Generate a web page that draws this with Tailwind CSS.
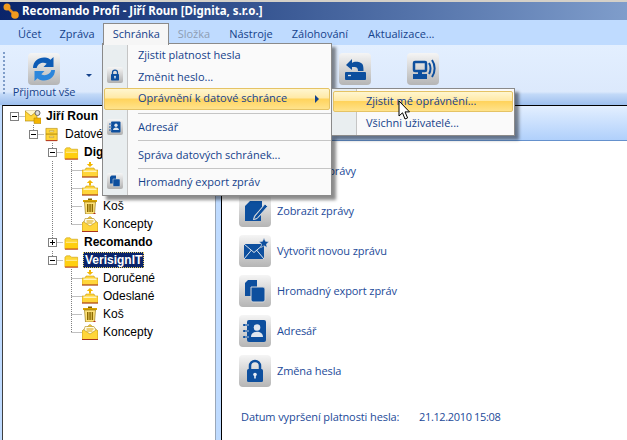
<!DOCTYPE html>
<html lang="en">
<head>
<meta charset="UTF-8">
<title>Recomando Profi</title>
<script src="https://cdn.jsdelivr.net/npm/@tailwindcss/browser@4"></script>
</head>
<body class="bg-white">
<svg width="0" height="0" class="absolute">
  <defs>
    <symbol id="folder" viewBox="0 0 16 16"><path d="M1 4.500 2.500 3h4l1.500 1.500h6.500V15H1z" fill="#fdd835" stroke="#c99700" stroke-width=".6"/><path d="M1 6.500h13.600V15H1z" fill="#ffcf10"/><path d="M1 14.500h14v1H1z" fill="#b3261e"/><path d="M2 7h12v1.500H2z" fill="#ffe98a"/></symbol>
    <symbol id="inbox" viewBox="0 0 16 16"><path d="M8 5 4.800 2H7V0h2v2h2.200z" fill="#f2b600"/><path d="M0 8h3l1-2h8l1 2h3v7H0z" fill="#ffd53a" stroke="#b98a00" stroke-width=".5"/><path d="M1.500 8.500h13v1.500h-13z" fill="#fff3b8"/><path d="M0 14.500h16v1H0z" fill="#a8341c"/></symbol>
    <symbol id="outbox" viewBox="0 0 16 16"><path d="M8 0 11.200 3H9v2.500H7V3H4.800z" fill="#f2b600"/><path d="M0 8h3l1-2h8l1 2h3v7H0z" fill="#ffd53a" stroke="#b98a00" stroke-width=".5"/><path d="M1.500 8.500h13v1.500h-13z" fill="#fff3b8"/><path d="M0 14.500h16v1H0z" fill="#a8341c"/></symbol>
    <symbol id="trash" viewBox="0 0 16 16"><path d="M1 2h14v2H1z" fill="#d9a400"/><path d="M6 .5h4V2H6z" fill="#806000"/><path d="M2.500 4h11l-1 12h-9z" fill="#ffe27a" stroke="#8c6a00" stroke-width=".6"/><path d="M5 6h1.500v8H5zM7.300 6h1.500v8H7.300zM9.600 6h1.500v8H9.600z" fill="#8c6a00"/><path d="M11.500 15h2v1h-2z" fill="#b3261e"/></symbol>
    <symbol id="draft" viewBox="0 0 16 16"><path d="M0 7 8 .5 16 7v8.500H0z" fill="#ffd53a" stroke="#a67c00" stroke-width=".6"/><path d="M3 2.500h9l2 3.500-6 4-6-4z" fill="#fffbe6" stroke="#a67c00" stroke-width=".5"/><path d="M4.500 5h7M4.500 7h6" stroke="#d9a400"/><path d="M0 15h16v1H0z" fill="#a8341c"/></symbol>
    <symbol id="account" viewBox="0 0 16 16"><path d="M0 3h12v10H0z" fill="#ffd53a" stroke="#a67c00" stroke-width=".6"/><path d="M0 3 6 8l6-5" fill="#fff6cc" stroke="#a67c00" stroke-width=".6"/><circle cx="12.500" cy="5" r="2.500" fill="#ddd" stroke="#666"/><path d="M9 10h7v5.500H9z" fill="#f5b400" stroke="#a67c00" stroke-width=".5"/></symbol>
    <symbol id="drawer" viewBox="0 0 16 16"><path d="M1 1h13v14H1z" fill="#ffd53a" stroke="#a67c00" stroke-width=".6"/><path d="M1 7.500h13" stroke="#a67c00"/><path d="M5 3.500h5v1.500H5zM5 10h5v1.500H5z" fill="#fff3b8" stroke="#8c6a00" stroke-width=".4"/><path d="M1 14.500h13v1H1z" fill="#b3261e"/></symbol>

    <symbol id="i-lock" viewBox="0 0 32 32"><path d="M11 15v-4a5 5 0 0 1 10 0v4" fill="none" stroke="#0d4f9e" stroke-width="2.500"/><rect x="8" y="14" width="16" height="13" rx="1.500" fill="#0d4f9e"/><circle cx="16" cy="19.500" r="1.800" fill="#e8eef5"/><rect x="15.200" y="20" width="1.600" height="3.500" fill="#e8eef5"/></symbol>
    <symbol id="i-book" viewBox="0 0 32 32"><rect x="8" y="5" width="19" height="22" rx="2" fill="#0d4f9e"/><circle cx="18" cy="12.500" r="3.300" fill="#dfe6ee"/><path d="M12 22c0-7 12-7 12 0z" fill="#dfe6ee"/><path d="M5 10h6M5 16h6M5 22h6" stroke="#0d4f9e" stroke-width="2.200" stroke-linecap="round" fill="none"/><path d="M6 10h4M6 16h4M6 22h4" stroke="#dfe6ee" stroke-width=".8"/></symbol>
    <symbol id="i-export" viewBox="0 0 32 32"><path d="M6 8l3-3h9v16H6z" fill="#0d4f9e"/><path d="M12 12h12a2 2 0 0 1 2 2v11a2 2 0 0 1-2 2H14a2 2 0 0 1-2-2z" fill="#0d4f9e" stroke="#d8d8d8" stroke-width="1"/></symbol>
    <symbol id="i-sync" viewBox="0 0 32 32"><path d="M5 15C5 8 11 4 17 4.500c2.500.2 4.500 1 5.500 2.200L25.500 4v10h-10l3.200-3.200c-3.500-2.200-9-.4-10 4.200z" fill="#0d5bb5"/><path d="M27 17c0 7-6 11-12 10.500-2.500-.2-4.500-1-5.500-2.200L6.500 28V18h10l-3.200 3.200c3.500 2.200 9 .4 10-4.200z" fill="#2c86dc"/></symbol>
    <symbol id="i-reply" viewBox="0 0 32 32"><rect x="6" y="19" width="21" height="8" rx="1" fill="#0d4f9e"/><path d="M9 22.500h3" stroke="#dfe6ee" stroke-width="1.300"/><path d="M7 12 13 6v4c2-2 10-2 11 2.500 .5 2 .5 4 .5 5.500H19c0-3-1-4.500-6-4v3z" fill="#0d4f9e"/></symbol>
    <symbol id="i-signal" viewBox="0 0 32 32"><rect x="7" y="9" width="12" height="9" rx="1" fill="none" stroke="#0d4f9e" stroke-width="2.500"/><path d="M11 18h4v3h-4zM6 21h14v5H6z" fill="#0d4f9e"/><path d="M22 10c2 3 2 8 0 11M25 7c3.500 5 3.500 12 0 17" fill="none" stroke="#0d4f9e" stroke-width="2"/></symbol>
    <symbol id="i-note" viewBox="0 0 32 32"><path d="M6 11l5-5h12v6l-8 9-1 4 4-1 4-4v6H6z" fill="#0d4f9e"/><path d="M16 21 26 9l2.500 2.500L18 23.500l-3.500 1z" fill="#0d4f9e" stroke="#e4e4e4" stroke-width=".8"/></symbol>
    <symbol id="i-mail" viewBox="0 0 32 32"><path d="M5 9h20v15H5z" fill="#0d4f9e"/><path d="M5 9l10 8.500L25 9M5 24l7.500-9M25 24l-7.500-9" fill="none" stroke="#dfe6ee" stroke-width="1"/><path d="M25 3l1.500 3.300 3.500.4-2.600 2.400.7 3.500-3.100-1.800-3.100 1.800.7-3.500-2.600-2.400 3.500-.4z" fill="#0d4f9e" stroke="#e4e4e4" stroke-width=".6"/></symbol>
  </defs>
</svg>

<div class="relative w-[627px] h-[440px] overflow-hidden flex flex-col font-['Open_Sans',sans-serif] text-[11px] text-[#15428b]">

  <!-- Title bar -->
  <div class="h-[2px] bg-[#d4d0c8]"></div>
  <div class="h-[18px] flex items-center bg-gradient-to-r from-[#0a246a] to-[#7f9dcb]">
    <svg class="w-[16px] h-[16px] ml-[3px]" viewBox="0 0 16 16"><path d="M3.500 3.500 12 12" stroke="#e88a1a" stroke-width="2.500"/><circle cx="4" cy="4" r="3.500" fill="#f09a1e"/><circle cx="12" cy="12" r="3.800" fill="#f09a1e"/></svg>
    <span class="ml-[3px] text-white font-bold text-[11.5px] font-['Noto_Sans',sans-serif] whitespace-nowrap">Recomando Profi - Jiří Roun [Dignita, s.r.o.]</span>
  </div>

  <!-- Menu bar -->
  <div class="h-[25px] bg-[#bfdbff] flex items-center whitespace-nowrap pt-[3px]">
    <span class="ml-[18px]">Účet</span>
    <span class="ml-[18px]">Zpráva</span>
    <div class="relative z-20 self-start ml-[8px] w-[66px] h-[22px] bg-[#f6f6f6] border border-b-0 border-[#8a8a8a] pl-[9px] leading-[19px]">Schránka</div>
    <span class="ml-[9px] text-[#8d9db3]">Složka</span>
    <span class="ml-[19px]">Nástroje</span>
    <span class="ml-[19px]">Zálohování</span>
    <span class="ml-[20px]">Aktualizace...</span>
  </div>

  <!-- Toolbar -->
  <div class="h-[60px] relative bg-[linear-gradient(#e3efff_0%,#dce9fc_78%,#c2d9f8_82%,#9dbfee_100%)] flex items-start">
    <div class="ml-[3px] mt-[7px] h-[42px] border-l-2 border-dotted border-[#7f9dc9]"></div>
    <div class="ml-[7px] flex flex-col items-center w-[64px] mt-[8px]">
      <div class="w-[32px] h-[32px] rounded-[4px] bg-gradient-to-b from-[#f5f5f5] to-[#b5b5b5]"><svg class="w-full h-full"><use href="#i-sync"/></svg></div>
      <span class="-mt-[1px] leading-[15px] tracking-[-0.1px]">Přijmout vše</span>
    </div>
    <div class="ml-[10px] mt-[29px] w-0 h-0 border-x-[3px] border-x-transparent border-t-[3px] border-t-[#15428b]"></div>
    <div class="ml-[247px] mt-[8px] w-[32px] h-[32px] rounded-[4px] bg-gradient-to-b from-[#f5f5f5] to-[#b5b5b5]"><svg class="w-full h-full"><use href="#i-reply"/></svg></div>
    <div class="ml-[36px] mt-[8px] w-[32px] h-[32px] rounded-[4px] bg-gradient-to-b from-[#f5f5f5] to-[#b5b5b5]"><svg class="w-full h-full"><use href="#i-signal"/></svg></div>
  </div>

  <!-- Main -->
  <div class="flex-1 flex min-h-0 bg-[#bfdbff]">
    <!-- Tree -->
    <div class="relative ml-[2px] w-[214px] border-l border-t border-l-[#404040] border-t-black bg-white border-r border-r-[#9aa7b8] font-['Liberation_Sans',sans-serif] text-[12px] text-black whitespace-nowrap pt-[1px]">
      <svg class="absolute left-0 top-0 w-[214px] h-[334px]" fill="none" stroke="#808080" stroke-dasharray="1 1">
        <path d="M11.500 10.500H22M30.500 19V29M30.500 28.500H41M49.500 37V47M49.500 46.500H60M49.500 55V137M49.500 136.500H60M49.500 145V155M49.500 154.500H60M68.500 55V118M68.500 64.500H79M68.500 82.500H79M68.500 100.500H79M68.500 118.500H79M68.500 163V226M68.500 172.500H79M68.500 190.500H79M68.500 208.500H79M68.500 226.500H79"/>
      </svg>
      <div class="relative flex items-center h-[18px]"><span class="ml-[7px] w-[9px] h-[9px] border border-[#808080] bg-white flex items-center justify-center"><span class="w-[5px] h-px bg-black"></span></span><svg class="ml-[6px] w-[16px] h-[16px]"><use href="#account"/></svg><span class="ml-[5px] font-bold">Jiří Roun</span></div>
      <div class="relative flex items-center h-[18px]"><span class="ml-[26px] w-[9px] h-[9px] border border-[#808080] bg-white flex items-center justify-center"><span class="w-[5px] h-px bg-black"></span></span><svg class="ml-[7px] w-[14px] h-[15px]"><use href="#drawer"/></svg><span class="ml-[6px]">Datové schránky</span></div>
      <div class="relative flex items-center h-[18px]"><span class="ml-[45px] w-[9px] h-[9px] border border-[#808080] bg-white flex items-center justify-center"><span class="w-[5px] h-px bg-black"></span></span><svg class="ml-[7px] w-[15px] h-[15px]"><use href="#folder"/></svg><span class="ml-[5px] font-bold">Dignita</span></div>
      <div class="relative flex items-center h-[18px]"><svg class="ml-[79px] w-[16px] h-[16px]"><use href="#inbox"/></svg><span class="ml-[5px]">Doručené</span></div>
      <div class="relative flex items-center h-[18px]"><svg class="ml-[79px] w-[16px] h-[16px]"><use href="#outbox"/></svg><span class="ml-[5px]">Odeslané</span></div>
      <div class="relative flex items-center h-[18px]"><svg class="ml-[79px] w-[16px] h-[16px]"><use href="#trash"/></svg><span class="ml-[5px]">Koš</span></div>
      <div class="relative flex items-center h-[18px]"><svg class="ml-[79px] w-[16px] h-[16px]"><use href="#draft"/></svg><span class="ml-[5px]">Koncepty</span></div>
      <div class="relative flex items-center h-[18px]"><span class="ml-[45px] w-[9px] h-[9px] border border-[#808080] bg-white flex items-center justify-center text-[9px] leading-none"><span class="relative w-[5px] h-px bg-black"><span class="absolute left-[2px] top-[-2px] w-px h-[5px] bg-black"></span></span></span><svg class="ml-[7px] w-[15px] h-[15px]"><use href="#folder"/></svg><span class="ml-[5px] font-bold">Recomando</span></div>
      <div class="relative flex items-center h-[18px]"><span class="ml-[45px] w-[9px] h-[9px] border border-[#808080] bg-white flex items-center justify-center"><span class="w-[5px] h-px bg-black"></span></span><svg class="ml-[7px] w-[15px] h-[15px]"><use href="#folder"/></svg><span class="ml-[4px] px-[1px] h-[16px] leading-[14px] font-bold bg-[#0a246a] text-white border border-dotted border-[#e8d060]">VerisignIT</span></div>
      <div class="relative flex items-center h-[18px]"><svg class="ml-[79px] w-[16px] h-[16px]"><use href="#inbox"/></svg><span class="ml-[5px]">Doručené</span></div>
      <div class="relative flex items-center h-[18px]"><svg class="ml-[79px] w-[16px] h-[16px]"><use href="#outbox"/></svg><span class="ml-[5px]">Odeslané</span></div>
      <div class="relative flex items-center h-[18px]"><svg class="ml-[79px] w-[16px] h-[16px]"><use href="#trash"/></svg><span class="ml-[5px]">Koš</span></div>
      <div class="relative flex items-center h-[18px]"><svg class="ml-[79px] w-[16px] h-[16px]"><use href="#draft"/></svg><span class="ml-[5px]">Koncepty</span></div>
    </div>

    <!-- Content -->
    <div class="ml-[5px] flex-1 border-l border-black flex flex-col bg-white">
      <div class="h-[36px] border-t border-t-black border-b border-b-[#6591cd] bg-gradient-to-b from-[#e3efff] to-[#b0d0fb]"></div>
      <div class="flex-1 pl-[17px] pt-[14px] text-[#1c4a99] whitespace-nowrap tracking-[-0.1px]">
        <div class="flex flex-col gap-[8px]">
          <div class="flex items-center gap-[6px]"><div class="w-[32px] h-[32px] rounded-[4px] bg-gradient-to-b from-[#f5f5f5] to-[#b5b5b5]"><svg class="w-full h-full"><use href="#i-sync"/></svg></div><span>Přijmout zprávy</span></div>
          <div class="flex items-center gap-[6px]"><div class="w-[32px] h-[32px] rounded-[4px] bg-gradient-to-b from-[#f5f5f5] to-[#b5b5b5]"><svg class="w-full h-full"><use href="#i-note"/></svg></div><span>Zobrazit zprávy</span></div>
          <div class="flex items-center gap-[6px]"><div class="w-[32px] h-[32px] rounded-[4px] bg-gradient-to-b from-[#f5f5f5] to-[#b5b5b5]"><svg class="w-full h-full"><use href="#i-mail"/></svg></div><span>Vytvořit novou zprávu</span></div>
          <div class="flex items-center gap-[6px]"><div class="w-[32px] h-[32px] rounded-[4px] bg-gradient-to-b from-[#f5f5f5] to-[#b5b5b5]"><svg class="w-full h-full"><use href="#i-export"/></svg></div><span>Hromadný export zpráv</span></div>
          <div class="flex items-center gap-[6px]"><div class="w-[32px] h-[32px] rounded-[4px] bg-gradient-to-b from-[#f5f5f5] to-[#b5b5b5]"><svg class="w-full h-full"><use href="#i-book"/></svg></div><span>Adresář</span></div>
          <div class="flex items-center gap-[6px]"><div class="w-[32px] h-[32px] rounded-[4px] bg-gradient-to-b from-[#f5f5f5] to-[#b5b5b5]"><svg class="w-full h-full"><use href="#i-lock"/></svg></div><span>Změna hesla</span></div>
        </div>
        <div class="flex mt-[22px] ml-[2px]"><span class="w-[178px]">Datum vypršení platnosti hesla:</span><span class="tracking-[-0.35px]">21.12.2010 15:08</span></div>
      </div>
    </div>
  </div>

  <!-- Dropdown menu -->
  <div class="absolute left-[102px] top-[43px] w-[230px] h-[153px] bg-[#fafafa] border border-[#8a8a8a] shadow-[4px_4px_3px_rgba(0,0,0,0.45)] z-10 flex flex-col">
    <div class="absolute left-0 top-0 bottom-0 w-[25px] bg-[#e9eef0] border-r border-[#c5c5c5]"></div>
    <div class="relative h-[22px] pl-[35px] flex items-center">Zjistit platnost hesla</div>
    <div class="relative h-[22px] pl-[35px] flex items-center"><div class="absolute left-[4px] top-[1px] w-[16px] h-[16px] rounded-[2px] bg-gradient-to-b from-[#f5f5f5] to-[#b0b0b0]"><svg class="w-full h-full"><use href="#i-lock"/></svg></div>Změnit heslo...</div>
    <div class="relative mx-[1px] h-[22px] pl-[33px] flex items-center rounded-[2px] border border-[#e5c365] bg-[linear-gradient(#fff6d0_0%,#ffe9a6_45%,#ffd35c_50%,#ffe38c_100%)]">Oprávnění k datové schránce<span class="absolute right-[10px] top-[6px] w-0 h-0 border-y-[4px] border-y-transparent border-l-[4px] border-l-[#15428b]"></span></div>
    <div class="relative h-px bg-[#c5c5c5] ml-[35px] mt-[3px]"></div>
    <div class="relative h-[27px] pl-[35px] flex items-center"><div class="absolute left-[4px] top-[5px] w-[16px] h-[16px] rounded-[2px] bg-gradient-to-b from-[#f5f5f5] to-[#b0b0b0]"><svg class="w-full h-full"><use href="#i-book"/></svg></div>Adresář</div>
    <div class="relative h-px bg-[#c5c5c5] ml-[35px]"></div>
    <div class="relative h-[27px] pl-[35px] flex items-center">Správa datových schránek...</div>
    <div class="relative h-px bg-[#c5c5c5] ml-[35px]"></div>
    <div class="relative h-[26px] pl-[35px] flex items-center"><div class="absolute left-[4px] top-[4px] w-[16px] h-[16px] rounded-[2px] bg-gradient-to-b from-[#f5f5f5] to-[#b0b0b0]"><svg class="w-full h-full"><use href="#i-export"/></svg></div>Hromadný export zpráv</div>
  </div>

  <!-- Submenu -->
  <div class="absolute left-[331px] top-[88px] w-[184px] h-[48px] bg-[#fafafa] border border-[#8a8a8a] shadow-[4px_4px_3px_rgba(0,0,0,0.45)] z-20">
    <div class="absolute left-0 top-0 bottom-0 w-[25px] bg-[#e9eef0] border-r border-[#c5c5c5]"></div>
    <div class="relative mx-[1px] mt-[2px] h-[21px] pl-[32px] flex items-center rounded-[2px] border border-[#e5c365] bg-[linear-gradient(#fff6d0_0%,#ffe9a6_45%,#ffd35c_50%,#ffe38c_100%)]">Zjistit mé oprávnění...</div>
    <div class="relative h-[22px] pl-[34px] flex items-center">Všichni uživatelé...</div>
  </div>

  <!-- Mouse cursor -->
  <svg class="absolute left-[398px] top-[100px] w-[13px] h-[21px] z-30" viewBox="0 0 13 21"><path d="M1 1v15l3.500-3.200 2.500 6.200 2.600-1.100-2.600-6H11.500z" fill="#fff" stroke="#000"/></svg>
</div>
</body>
</html>
